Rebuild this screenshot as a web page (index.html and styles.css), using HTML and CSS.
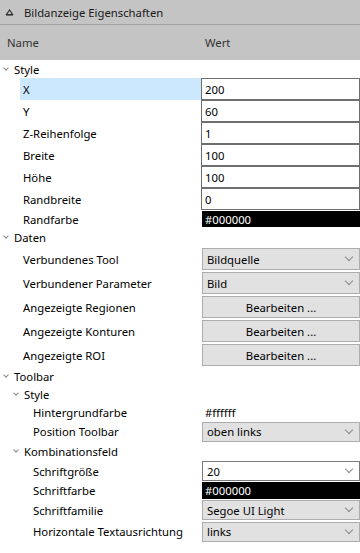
FILE: index.html
```html
<!DOCTYPE html>
<html lang="de">
<head>
    <meta charset="UTF-8">
    <meta name="viewport" content="width=device-width, initial-scale=1.0">
    <title>Bildanzeige Eigenschaften</title>
    <link rel="stylesheet" href="styles.css">
</head>
<body>
    <div class="panel">
        <div class="titlebar">
            <svg class="title-icon" width="9" height="7" viewBox="0 0 9 7">
                <path d="M4.5 1 L1.5 5.5 H7.5 Z" fill="none" stroke="#333" stroke-width="1.2"/>
                <rect x="1" y="5" width="7" height="1.6" fill="#333"/>
            </svg>
            <span>Bildanzeige Eigenschaften</span>
        </div>
        <div class="colheader">
            <div class="col-name">Name</div>
            <div class="col-value">Wert</div>
        </div>

        <div class="grid">
            <!-- Style -->
            <div class="row group"><div class="name d0"><i class="chev"></i>Style</div></div>
            <div class="row r22"><div class="name d1"><span class="hl">X</span></div><div class="value"><div class="input">200</div></div></div>
            <div class="row r22"><div class="name d1">Y</div><div class="value"><div class="input">60</div></div></div>
            <div class="row r22"><div class="name d1">Z-Reihenfolge</div><div class="value"><div class="input">1</div></div></div>
            <div class="row r22"><div class="name d1">Breite</div><div class="value"><div class="input">100</div></div></div>
            <div class="row r22"><div class="name d1">Höhe</div><div class="value"><div class="input">100</div></div></div>
            <div class="row r22"><div class="name d1">Randbreite</div><div class="value"><div class="input">0</div></div></div>
            <div class="row r18"><div class="name d1">Randfarbe</div><div class="value"><div class="color">#000000</div></div></div>

            <!-- Daten -->
            <div class="row group g19"><div class="name d0"><i class="chev"></i>Daten</div></div>
            <div class="row r24"><div class="name d1">Verbundenes Tool</div><div class="value"><div class="combo">Bildquelle<i class="arrow"></i></div></div></div>
            <div class="row r24"><div class="name d1">Verbundener Parameter</div><div class="value"><div class="combo">Bild<i class="arrow"></i></div></div></div>
            <div class="row r24"><div class="name d1">Angezeigte Regionen</div><div class="value"><div class="button">Bearbeiten ...</div></div></div>
            <div class="row r24"><div class="name d1">Angezeigte Konturen</div><div class="value"><div class="button">Bearbeiten ...</div></div></div>
            <div class="row r24"><div class="name d1">Angezeigte ROI</div><div class="value"><div class="button">Bearbeiten ...</div></div></div>

            <!-- Toolbar -->
            <div class="row group"><div class="name d0"><i class="chev"></i>Toolbar</div></div>
            <div class="row group"><div class="name d1"><i class="chev"></i>Style</div></div>
            <div class="row r18"><div class="name d2">Hintergrundfarbe</div><div class="value"><div class="plain">#ffffff</div></div></div>
            <div class="row r21"><div class="name d2">Position Toolbar</div><div class="value"><div class="combo">oben links<i class="arrow"></i></div></div></div>
            <div class="row group g19"><div class="name d1"><i class="chev"></i>Kombinationsfeld</div></div>
            <div class="row r20"><div class="name d2">Schriftgröße</div><div class="value"><div class="combo white">20<i class="arrow"></i></div></div></div>
            <div class="row r19"><div class="name d2">Schriftfarbe</div><div class="value"><div class="color">#000000</div></div></div>
            <div class="row r20"><div class="name d2">Schriftfamilie</div><div class="value"><div class="combo">Segoe UI Light<i class="arrow"></i></div></div></div>
            <div class="row r23"><div class="name d2">Horizontale Textausrichtung</div><div class="value"><div class="combo">links<i class="arrow"></i></div></div></div>
        </div>
    </div>
</body>
</html>
```

FILE: styles.css
```css
body {
    margin: 0;
    background: #fff;
    font-family: "Noto Sans", "Open Sans", sans-serif;
    font-size: 11.3px;
    color: #000;
}
.panel {
    width: 360px;
    height: 553px;
    overflow: hidden;
}
.titlebar {
    height: 24px;
    background: #c4c4c4;
    border-bottom: 1px solid #a0a0a0;
    display: flex;
    align-items: center;
    color: #1a1a1a;
}
.title-icon {
    margin: 0 10px 0 5px;
}
.colheader {
    height: 35px;
    background: #c4c4c4;
    display: flex;
    align-items: center;
    color: #333;
}
.col-name {
    width: 201px;
    padding-left: 7px;
    box-sizing: border-box;
}
.col-value {
    padding-left: 4px;
}
.row {
    display: flex;
    align-items: stretch;
}
.group { height: 18px; }
.g19 { height: 19px; }
.r18 { height: 18px; }
.r19 { height: 19px; }
.r20 { height: 20px; }
.r21 { height: 21px; }
.r22 { height: 22px; }
.r23 { height: 23px; }
.r24 { height: 24px; }
.name {
    width: 201px;
    flex: none;
    display: flex;
    align-items: center;
    box-sizing: border-box;
    white-space: nowrap;
}
.group .d0 { padding-left: 3px; }
.group .d1 { padding-left: 13px; }
.d1 { padding-left: 23px; }
.d2 { padding-left: 33px; }
.name:has(.hl) {
    padding-left: 20px;
}
.hl {
    align-self: stretch;
    flex: 1;
    display: flex;
    align-items: center;
    padding-left: 3px;
    background: #cce8ff;
}
.chev {
    width: 3px;
    height: 3px;
    margin: -3px 6px 0 1px;
    border-right: 1px solid #8a8a8a;
    border-bottom: 1px solid #8a8a8a;
    transform: rotate(45deg);
}
.value {
    flex: 1;
    display: flex;
    align-items: center;
    min-width: 0;
}
.input {
    width: 100%;
    height: 100%;
    box-sizing: border-box;
    border: 1px solid #6e6e6e;
    background: #fff;
    padding-left: 3px;
    display: flex;
    align-items: center;
}
.color {
    margin-left: 1px;
    width: 100%;
    height: 100%;
    box-sizing: border-box;
    background: #000;
    color: #fff;
    padding-left: 3px;
    display: flex;
    align-items: center;
    border-top: 1px solid #fff;
    border-bottom: 1px solid #fff;
}
.plain {
    padding-left: 4px;
}
.combo, .button {
    margin-left: 1px;
    width: 100%;
    height: 100%;
    box-sizing: border-box;
    border: 1px solid #adadad;
    border-top-width: 0;
    border-bottom-width: 0;
    background: #e1e1e1;
    padding-left: 4px;
    display: flex;
    align-items: center;
}
.r24 .combo, .r24 .button {
    height: 22px;
    border-top-width: 1px;
    border-bottom-width: 1px;
}
.r21 .combo, .r23 .combo {
    height: 20px;
    border-top-width: 1px;
    border-bottom-width: 1px;
}
.r20 .combo {
    border-top-width: 1px;
    border-bottom-width: 1px;
}
.combo.white {
    background: #fff;
    border-color: #7a7a7a;
}
.button {
    justify-content: center;
    padding-left: 0;
}
.arrow {
    margin: -4px 7px 0 auto;
    width: 5px;
    height: 5px;
    border-right: 1px solid #8a8a8a;
    border-bottom: 1px solid #8a8a8a;
    transform: rotate(45deg);
}
```
